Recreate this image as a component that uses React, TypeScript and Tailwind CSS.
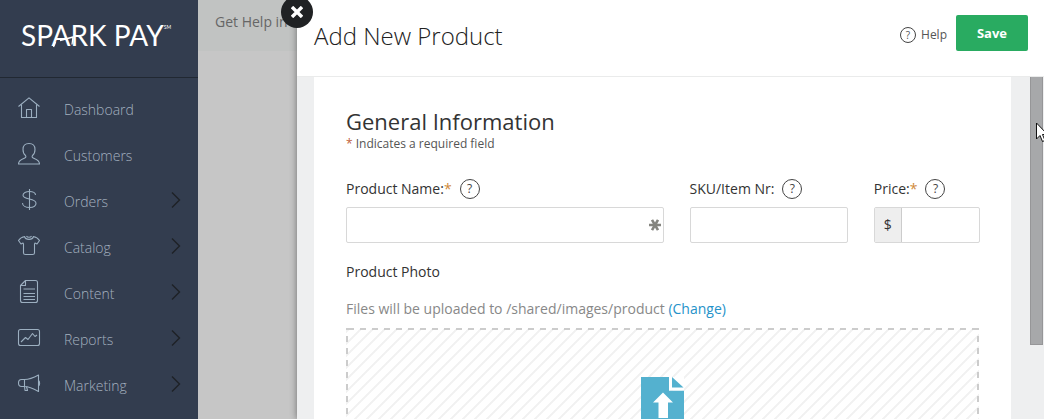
import type { ReactNode } from "react";

type NavItem = { label: string; icon: ReactNode; hasChildren: boolean };

const navItems: NavItem[] = [
  {
    label: "Dashboard",
    hasChildren: false,
    icon: (
      <>
        <path d="M1.5 9.5 12 .8l10.500 8.700" />
        <path d="M4.500 7.500v13h15v-13" />
        <path d="M9.500 20.500v-8h5v8" />
      </>
    ),
  },
  {
    label: "Customers",
    hasChildren: false,
    icon: (
      <path d="M12 .5c-3.500 0-6 2.300-6 6 0 2.500 1 4.800 2.500 6 .8 1.200.3 2-.8 2.500-3.200 1.300-6.200 2-6.200 6h21c0-4-3-4.700-6.200-6-1.100-.5-1.600-1.300-.8-2.500 1.500-1.200 2.500-3.500 2.500-6 0-3.700-2.500-6-6-6Z" />
    ),
  },
  {
    label: "Orders",
    hasChildren: true,
    icon: (
      <>
        <path d="M12.500 0v21" />
        <path d="M18.500 6c0-2.300-2.500-3.500-6-3.500S6 4 6 6.300c0 5 13 2.500 13 8 0 2.700-3 4.200-6.500 4.200S5.500 17 5.500 14" />
      </>
    ),
  },
  {
    label: "Catalog",
    hasChildren: true,
    icon: (
      <>
        <path d="M8 1.500C5 2 3 3 1.500 5.500l2.500 3.500 2-1 .5 1v9c0 1.200.8 1.500 2 1.500h7c1.200 0 2-.3 2-1.500V9l.5-1 2 1 2.500-3.500C21 3 19 2 16 1.500" />
        <path d="M7.500 1.500c1 3.800 8 3.800 9 0M9.500 1c.8 1.600 4.200 1.600 5 0" />
      </>
    ),
  },
  {
    label: "Content",
    hasChildren: true,
    icon: (
      <>
        <path d="M8.500-.500h10c1.200 0 2 .8 2 2v18c0 1.200-.8 2-2 2h-13c-1.200 0-2-.8-2-2v-15l5-5v5h-5" />
        <path d="M6.500 8h11.500M6.500 12.500h11.500M6.500 15.500h11.500M6.500 18.500h11.500" />
      </>
    ),
  },
  {
    label: "Reports",
    hasChildren: true,
    icon: (
      <>
        <rect x="1.500" y="2.500" width="21" height="16" rx="2" />
        <path d="m4 15 4.500-4.500 2.500 2 4.500-6 2.500 3 2-1.500" />
      </>
    ),
  },
  {
    label: "Marketing",
    hasChildren: true,
    icon: (
      <>
        <path d="M7.500 6.500h-3c-2 0-3 1.800-3 3.500s1 3.500 3 3.500h3zM7.500 6.500C12 6.500 17 4.500 21.500 2v16.500c-4.500-2.500-9.500-5-14-5" />
        <path d="M21.500 7.500c1.500 1 1.500 4.500 0 5.500M7.500 13.500l.5 4h2.500l-1-4" />
      </>
    ),
  },
];

function HelpDot({ label, small = false }: { label: string; small?: boolean }) {
  return (
    <span
      role="img"
      aria-label={label}
      className={
        small
          ? "flex size-4 items-center justify-center rounded-full border border-[#444] text-[10px] leading-none text-[#555]"
          : "flex size-5 items-center justify-center rounded-full border border-[#444] text-xs leading-none text-[#444]"
      }
    >
      ?
    </span>
  );
}

function FieldLabel({ id, text, required = false }: { id: string; text: string; required?: boolean }) {
  return (
    <div className="flex h-5 items-center gap-2 whitespace-nowrap">
      <label htmlFor={id}>
        {text}
        {required && <span className="text-[#d08a3a]">*</span>}
      </label>
      <HelpDot label={`About ${text}`} />
    </div>
  );
}

function Sidebar() {
  return (
    <aside className="w-[198px] shrink-0 bg-[#333d4f]">
      <div className="flex h-[78px] items-start border-b border-[#212832] pt-[19px] pl-[21px]">
        <a href="#" className="relative flex items-start font-['Lato',sans-serif] text-[28px] leading-8 whitespace-nowrap text-white">
          SPARK PAY
          <span className="pt-px text-[5px] leading-[14px]">SM</span>
          <svg className="absolute top-0 left-8 h-8 w-6" viewBox="0 0 24 32" fill="none" stroke="#fff" strokeWidth="1.300" aria-hidden="true">
            <path d="M2.500 23 .500 28M7 21.500l13-3.500-1 7.500" />
          </svg>
        </a>
      </div>
      <nav className="pt-2">
        <ul>
          {navItems.map((item) => (
            <li key={item.label}>
              <a href="#" className="flex h-[46px] items-center pr-[17px] pl-[17px] text-sm font-light text-[#a3b0bf]">
                <svg className="mr-[23px] size-6 shrink-0 overflow-visible" viewBox="0 0 24 24" fill="none" stroke="#9cafc0" strokeWidth="1.100" strokeLinejoin="round" aria-hidden="true">
                  {item.icon}
                </svg>
                <span className="grow pt-0.5">{item.label}</span>
                {item.hasChildren && (
                  <svg className="-mt-0.5 h-4 w-2.5" viewBox="0 0 10 16" fill="none" stroke="#1e2226" strokeWidth="1.400" aria-hidden="true">
                    <path d="m1 .5 7.500 7.500L1 15.500" />
                  </svg>
                )}
              </a>
            </li>
          ))}
        </ul>
      </nav>
    </aside>
  );
}

function UploadArea() {
  return (
    <div className="mt-[9px] flex h-60 justify-center bg-[linear-gradient(90deg,#ccc_50%,transparent_50%),linear-gradient(90deg,#ccc_50%,transparent_50%),linear-gradient(180deg,#ccc_50%,transparent_50%),linear-gradient(180deg,#ccc_50%,transparent_50%),linear-gradient(135deg,#f1f1f1_4%,transparent_5%,transparent_45%,#f1f1f1_46%,#f1f1f1_54%,transparent_55%,transparent_95%,#f1f1f1_96%)] bg-[length:12px_2px,12px_2px,2px_12px,2px_12px,12px_12px] bg-[position:2px_0,2px_100%,0_8px,100%_8px,4px_0] [background-repeat:repeat-x,repeat-x,repeat-y,repeat-y,repeat] pt-[49px]">
      <svg className="h-14 w-[43px]" viewBox="0 0 43 56" role="img" aria-label="Upload a photo">
        <path fill="#54b1cf" d="M0 0h28v13.500h15V56H0Z" />
        <path fill="#fff" d="M28 0h15v13.500H28Z" />
        <path fill="#54b1cf" d="M31 0v10.500h11.500Z" />
        <path fill="#fff" d="M22 15.500 32 25.500h-5V41h-9.500V25.500H12Z" />
      </svg>
    </div>
  );
}

const inputStyle = "h-9 w-full min-w-0 rounded-xs border border-[#d8d8d8] bg-white px-2 text-sm outline-none";

function ProductForm() {
  return (
    <section className="min-w-0 grow bg-white pt-8 pr-[31px] pl-8 text-sm leading-5 text-[#333]">
      <h2 className="text-[22px] leading-6">General Information</h2>
      <p className="pt-px text-xs leading-5 text-[#555]">
        <span className="text-[#c0603a]">*</span> Indicates a required field
      </p>
      <div className="mt-[25px] grid grid-cols-[317fr_158fr_106fr] gap-[26px]">
        <div className="min-w-0">
          <FieldLabel id="name" text="Product Name:" required />
          <div className="relative mt-2">
            <input id="name" type="text" className={inputStyle} />
            <svg className="absolute top-3 right-[3px] size-3" viewBox="0 0 12 12" stroke="#85857f" strokeWidth="2.600" aria-hidden="true">
              <path d="M0 6h12M3 .800l6 10.400M9 .800 3 11.200" />
            </svg>
          </div>
        </div>
        <div className="min-w-0">
          <FieldLabel id="sku" text="SKU/Item Nr:" />
          <div className="mt-2">
            <input id="sku" type="text" className={inputStyle} />
          </div>
        </div>
        <div className="min-w-0">
          <FieldLabel id="price" text="Price:" required />
          <div className="mt-2 flex h-9 overflow-hidden rounded-xs border border-[#d8d8d8]">
            <span className="flex w-[27px] shrink-0 items-center justify-center border-r border-[#ccc] bg-[#eee]">$</span>
            <input id="price" type="text" className="w-full min-w-0 px-2 outline-none" />
          </div>
        </div>
      </div>
      <div className="pr-px">
        <h3 className="mt-[19px]">Product Photo</h3>
        <p className="mt-[17px] whitespace-nowrap text-[#888]">
          Files will be uploaded to /shared/images/product{" "}
          <a href="#" className="text-[#2592c9]">(Change)</a>
        </p>
        <UploadArea />
      </div>
    </section>
  );
}

export default function App() {
  return (
    <div className="relative flex h-screen overflow-hidden font-['Open_Sans',sans-serif]">
      <Sidebar />
      <div className="w-[99px] shrink-0 overflow-hidden bg-[#c6c6c6]">
        <div className="h-[51px] bg-[#c1c3c2] pt-3 pl-[17px] text-sm leading-5 whitespace-nowrap text-[#666]">Get Help in</div>
      </div>
      <main className="relative flex min-w-0 grow flex-col bg-[#eeeff0] shadow-[0_0_7px_rgba(0,0,0,0.45)]">
        <button type="button" aria-label="Close" className="absolute -top-1 -left-4 flex size-8 items-center justify-center rounded-full bg-[#202224]">
          <svg className="size-3" viewBox="0 0 12 12" stroke="#fff" strokeWidth="3.400" aria-hidden="true">
            <path d="m1 1 10 10M11 1 1 11" />
          </svg>
        </button>
        <header className="flex h-[77px] shrink-0 items-start border-b border-[#eaebeb] bg-white pr-4 pl-[17px]">
          <h1 className="grow pt-5 text-2xl leading-8 font-light text-[#222]">Add New Product</h1>
          <a href="#" className="mr-[9px] flex items-center gap-[5px] pt-[25px] text-xs leading-5 text-[#555]">
            <HelpDot label="Help topics" small />
            Help
          </a>
          <button type="button" className="mt-[15px] h-9 w-[72px] rounded-xs bg-[#29ab61] pt-px text-[13px] font-bold text-white">Save</button>
        </header>
        <div className="flex min-h-0 grow overflow-hidden pl-[17px]">
          <ProductForm />
          <div className="ml-[19px] h-[268px] w-[13px] shrink-0 border border-t-0 border-[#969698] bg-[#a7a8aa]" />
          <div className="w-px shrink-0" />
        </div>
      </main>
      <svg className="absolute top-[122px] left-[1036px] h-5 w-3" viewBox="0 0 12 20" fill="#fff" stroke="#111" aria-hidden="true">
        <path d="M.500 1v16l3.500-3.500L6.500 19.500l2.500-1-2.500-6H11.500Z" />
      </svg>
    </div>
  );
}
